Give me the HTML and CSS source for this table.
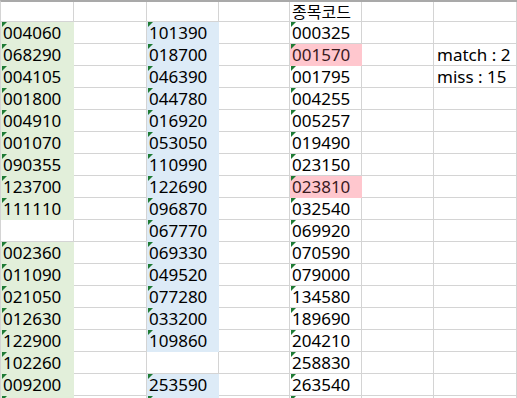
FILE: index.html
```html
<!DOCTYPE html>
<html lang="ko">
<head>
<meta charset="utf-8">
<title>Sheet</title>
<link rel="stylesheet" href="styles.css">
</head>
<body>
<div class="sheet">
  <div class="c first"></div><div class="c first"></div><div class="c first"></div><div class="c first"></div><div class="c first">종목코드</div><div class="c first"></div><div class="c first"></div>

  <div class="c g t">004060</div><div class="c"></div><div class="c b t">101390</div><div class="c"></div><div class="c t">000325</div><div class="c"></div><div class="c"></div>
  <div class="c g t">068290</div><div class="c"></div><div class="c b t">018700</div><div class="c"></div><div class="c p t">001570</div><div class="c"></div><div class="c lbl">match : 2</div>
  <div class="c g t">004105</div><div class="c"></div><div class="c b t">046390</div><div class="c"></div><div class="c t">001795</div><div class="c"></div><div class="c lbl">miss : 15</div>
  <div class="c g t">001800</div><div class="c"></div><div class="c b t">044780</div><div class="c"></div><div class="c t">004255</div><div class="c"></div><div class="c"></div>
  <div class="c g t">004910</div><div class="c"></div><div class="c b t">016920</div><div class="c"></div><div class="c t">005257</div><div class="c"></div><div class="c"></div>
  <div class="c g t">001070</div><div class="c"></div><div class="c b t">053050</div><div class="c"></div><div class="c t">019490</div><div class="c"></div><div class="c"></div>
  <div class="c g t">090355</div><div class="c"></div><div class="c b t">110990</div><div class="c"></div><div class="c t">023150</div><div class="c"></div><div class="c"></div>
  <div class="c g t">123700</div><div class="c"></div><div class="c b t">122690</div><div class="c"></div><div class="c p t">023810</div><div class="c"></div><div class="c"></div>
  <div class="c g t">111110</div><div class="c"></div><div class="c b t">096870</div><div class="c"></div><div class="c t">032540</div><div class="c"></div><div class="c"></div>
  <div class="c"></div><div class="c"></div><div class="c b t">067770</div><div class="c"></div><div class="c t">069920</div><div class="c"></div><div class="c"></div>
  <div class="c g t">002360</div><div class="c"></div><div class="c b t">069330</div><div class="c"></div><div class="c t">070590</div><div class="c"></div><div class="c"></div>
  <div class="c g t">011090</div><div class="c"></div><div class="c b t">049520</div><div class="c"></div><div class="c t">079000</div><div class="c"></div><div class="c"></div>
  <div class="c g t">021050</div><div class="c"></div><div class="c b t">077280</div><div class="c"></div><div class="c t">134580</div><div class="c"></div><div class="c"></div>
  <div class="c g t">012630</div><div class="c"></div><div class="c b t">033200</div><div class="c"></div><div class="c t">189690</div><div class="c"></div><div class="c"></div>
  <div class="c g t">122900</div><div class="c"></div><div class="c b t">109860</div><div class="c"></div><div class="c t">204210</div><div class="c"></div><div class="c"></div>
  <div class="c g t">102260</div><div class="c"></div><div class="c"></div><div class="c"></div><div class="c t">258830</div><div class="c"></div><div class="c"></div>
  <div class="c g t">009200</div><div class="c"></div><div class="c b t">253590</div><div class="c"></div><div class="c t">263540</div><div class="c"></div><div class="c"></div>
  <div class="c g t"></div><div class="c"></div><div class="c b t"></div><div class="c"></div><div class="c t"></div><div class="c"></div><div class="c"></div>
</div>
</body>
</html>
```

FILE: styles.css
```css
html, body {
  margin: 0;
  padding: 0;
  background: #ffffff;
  overflow: hidden;
  height: 398px;
}

.sheet {
  display: grid;
  grid-template-columns: 73px 73px 72px 71px 72px 72px 1fr;
  grid-template-rows: 20px;
  grid-auto-rows: 22px;
  border-top: 2px solid #a9a9a9;
  border-left: 1px solid #d4d4d4;
  font-family: "Noto Sans", "Noto Sans CJK KR", sans-serif;
  font-size: 17px;
  color: #000000;
}

.c {
  position: relative;
  box-sizing: border-box;
  border-right: 1px solid #d4d4d4;
  border-bottom: 1px solid #d4d4d4;
  padding: 0 0 0 2px;
  line-height: 21px;
  white-space: nowrap;
  overflow: hidden;
}

.first {
  line-height: 20px;
  font-size: 16px;
}

.g {
  background: #e2efda;
  border-color: #e2efda;
}

.b {
  background: #ddebf7;
  border-color: #ddebf7;
}

.p {
  background: #ffc7ce;
  border-color: #ffc7ce;
  color: #3a1a1e;
}

.t::before {
  content: "";
  position: absolute;
  left: 1px;
  top: 0;
  width: 0;
  height: 0;
  border-top: 5px solid #1e7b34;
  border-right: 5px solid transparent;
}

.lbl {
  padding-left: 3px;
}
```
